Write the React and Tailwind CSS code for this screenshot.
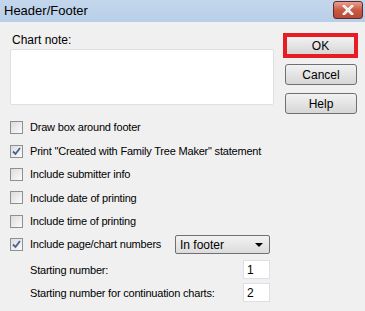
import React from "react";

const font = { fontFamily: '"Liberation Sans", Arial, sans-serif' };

const Check = ({ checked }) => (
  <span className="w-[13px] h-[13px] border border-[#8f8f8f] bg-gradient-to-br from-[#dcdcdc] to-[#fbfbfb] flex items-center justify-center shrink-0">
    {checked && (
      <svg width="9" height="9" viewBox="0 0 9 9">
        <path d="M1 4.5 L3.5 7 L8 1" fill="none" stroke="#4a5f97" strokeWidth="1.8" />
      </svg>
    )}
  </span>
);

const Row = ({ checked, label, children }) => (
  <div className="flex items-center h-[23.4px] pl-[10px]">
    <Check checked={checked} />
    <span className="ml-[7px] text-[11px] tracking-[-0.2px] text-black whitespace-nowrap">{label}</span>
    {children}
  </div>
);

const Btn = ({ children }) => (
  <button className="w-[72px] h-[21px] rounded-[3px] border border-[#707070] bg-gradient-to-b from-[#f2f2f2] to-[#d6d6d6] text-[12px] text-black leading-none">
    {children}
  </button>
);

export default function App() {
  return (
    <div className="w-[365px] h-[311px] bg-[#f0f0f0] relative overflow-hidden" style={font}>
      <div className="h-[22px] bg-gradient-to-b from-[#c3d6ec] to-[#b9cfe8] flex items-center justify-between pl-[4px] pr-[2px]">
        <span className="text-[13px] text-black">Header/Footer</span>
        <div className="w-[30px] h-[18px] -mt-[3px] rounded-[3px] border border-[#5c2a2a] bg-gradient-to-b from-[#e8a090] via-[#c85a44] to-[#b84a35] flex items-center justify-center">
          <svg width="12" height="10" viewBox="0 0 12 10">
            <path d="M2 1 L10 9 M10 1 L2 9" stroke="#fff" strokeWidth="2.6" strokeLinecap="square" />
            <path d="M2 1 L10 9 M10 1 L2 9" stroke="#e8e8e8" strokeWidth="1" />
          </svg>
        </div>
      </div>

      <div className="flex">
        <div className="w-[283px] shrink-0">
          <div className="pl-[12px] pt-[11px] text-[12px] text-black leading-[14px]">Chart note:</div>
          <div className="ml-[10px] mt-[2px] w-[264px] h-[56px] bg-white border border-[#dcdfe6] rounded-[2px]"></div>
          <div className="mt-[11px]">
            <Row label="Draw box around footer" />
            <Row checked label={'Print "Created with Family Tree Maker" statement'} />
            <Row label="Include submitter info" />
            <Row label="Include date of printing" />
            <Row label="Include time of printing" />
            <Row checked label="Include page/chart numbers">
              <div className="ml-auto mr-[13px] w-[95px] h-[19px] rounded-[2px] border border-[#707070] bg-gradient-to-b from-[#f2f2f2] to-[#dcdcdc] flex items-center justify-between pl-[4px] pr-[6px]">
                <span className="text-[12px] text-black">In footer</span>
                <svg width="8" height="4" viewBox="0 0 8 4">
                  <path d="M0 0 L8 0 L4 4 Z" fill="#000" />
                </svg>
              </div>
            </Row>
          </div>
          <div className="flex items-center justify-between h-[23px] pl-[30px] pr-[13px] mt-[2px]">
            <span className="text-[11px] tracking-[-0.2px] text-black whitespace-nowrap">Starting number:</span>
            <div className="w-[27px] h-[19px] bg-white border border-[#dcdfe6] text-[12px] pl-[3px] flex items-center">1</div>
          </div>
          <div className="flex items-center justify-between h-[23px] pl-[30px] pr-[13px]">
            <span className="text-[11px] tracking-[-0.2px] text-black whitespace-nowrap">Starting number for continuation charts:</span>
            <div className="w-[27px] h-[19px] bg-white border border-[#dcdfe6] text-[12px] pl-[3px] flex items-center">2</div>
          </div>
        </div>

        <div className="flex flex-col items-start pt-[11px]">
          <div className="border-[4px] border-[#e81c24] w-[75px] h-[25px] flex items-center justify-center">
            <button className="w-[67px] h-[17px] bg-gradient-to-b from-[#f2f2f2] to-[#d6d6d6] text-[12px] text-black leading-none">OK</button>
          </div>
          <div className="mt-[6px] ml-[2px] flex flex-col gap-[8px]">
            <Btn>Cancel</Btn>
            <Btn>Help</Btn>
          </div>
        </div>
      </div>
    </div>
  );
}
